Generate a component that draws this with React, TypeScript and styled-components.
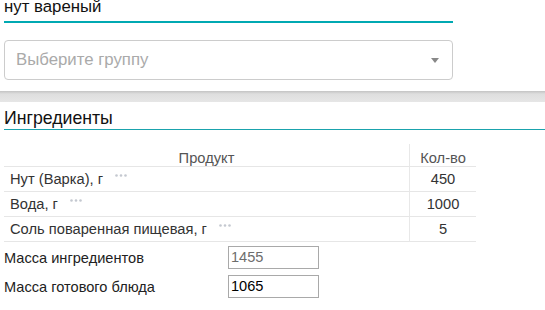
import styled, { createGlobalStyle } from 'styled-components'

const GlobalStyle = createGlobalStyle`
  html, body {
    margin: 0;
    padding: 0;
    background: #fff;
    overflow: hidden;
  }
  body {
    font-family: 'Liberation Sans', Arial, sans-serif;
    color: #333;
  }
`

const teal = '#00a9b2'

type Ingredient = { name: string; amount: number }

const ingredients: Ingredient[] = [
  { name: 'Нут (Варка), г', amount: 450 },
  { name: 'Вода, г', amount: 1000 },
  { name: 'Соль поваренная пищевая, г', amount: 5 },
]

const MoreDots = () => (
  <Dots width="12" height="3" viewBox="0 0 12 3">
    <circle cx="1.5" cy="1.5" r="1.3" />
    <circle cx="6" cy="1.5" r="1.3" />
    <circle cx="10.5" cy="1.5" r="1.3" />
  </Dots>
)

export default function App() {
  return (
    <>
      <GlobalStyle />
      <Page>
        <TopCard>
          <NameField>нут вареный</NameField>
          <Select>
            <Placeholder>Выберите группу</Placeholder>
            <Caret />
          </Select>
        </TopCard>
        <Band />
        <Section>
          <Heading>Ингредиенты</Heading>
          <Table>
            <HeadCell $first>Продукт</HeadCell>
            <HeadCell>Кол-во</HeadCell>
            {ingredients.map((item) => (
              <Row key={item.name}>
                <NameCell>
                  {item.name}
                  <MoreDots />
                </NameCell>
                <AmountCell>{item.amount}</AmountCell>
              </Row>
            ))}
          </Table>
          <Totals>
            <Label>Масса ингредиентов</Label>
            <ValueBox $muted>1455</ValueBox>
            <Label>Масса готового блюда</Label>
            <ValueBox>1065</ValueBox>
          </Totals>
        </Section>
      </Page>
    </>
  )
}

const Page = styled.div`
  width: 545px;
  height: 310px;
  overflow: hidden;
`

const TopCard = styled.div`
  padding: 0 92px 11px 4px;
`

const NameField = styled.div`
  margin-top: -2px;
  height: 17px;
  line-height: 17px;
  padding-bottom: 6px;
  font-size: 16.8px;
  color: #111;
  border-bottom: 2px solid ${teal};
`

const Select = styled.div`
  margin-top: 17px;
  height: 40px;
  box-sizing: border-box;
  border: 1px solid #ccc;
  border-radius: 4px;
  padding: 0 13px 0 11px;
  display: flex;
  align-items: center;
  justify-content: space-between;
`

const Placeholder = styled.span`
  font-size: 16.8px;
  color: #aaa;
`

const Caret = styled.span`
  width: 0;
  height: 0;
  border-left: 4px solid transparent;
  border-right: 4px solid transparent;
  border-top: 5px solid #888;
`

const Band = styled.div`
  height: 11px;
  background: linear-gradient(#c3c3c3, #dedede 3px, #e6e6e6);
`

const Section = styled.div`
  padding-top: 6px;
`

const Heading = styled.div`
  margin-left: 4px;
  font-size: 17.7px;
  line-height: 20px;
  padding-bottom: 1px;
  color: #111;
  border-bottom: 1px solid #1aa3ad;
`

const Table = styled.div`
  margin: 14px 0 0 4px;
  width: 472px;
  display: grid;
  grid-template-columns: 406px 66px;
`

const HeadCell = styled.div<{ $first?: boolean }>`
  height: 16px;
  padding-top: 6px;
  line-height: 16px;
  font-size: 14.7px;
  color: #555;
  text-align: center;
  border-bottom: 1px solid #e6e6e6;
  border-right: ${(p) => (p.$first ? '1px solid #e8e8e8' : 'none')};
`

const Row = styled.div`
  display: contents;
`

const NameCell = styled.div`
  height: 24px;
  line-height: 24px;
  padding-left: 6px;
  font-size: 14.7px;
  color: #333;
  border-bottom: 1px solid #e6e6e6;
  border-right: 1px solid #e8e8e8;
  white-space: nowrap;
`

const AmountCell = styled.div`
  height: 24px;
  line-height: 24px;
  text-align: center;
  font-size: 14.7px;
  color: #333;
  border-bottom: 1px solid #e6e6e6;
`

const Dots = styled.svg`
  margin-left: 12px;
  vertical-align: 7px;
  fill: #c4c8d0;
`

const Totals = styled.div`
  margin: 4px 0 0 4px;
  display: grid;
  grid-template-columns: 224px 91px;
  row-gap: 6px;
  align-items: center;
`

const Label = styled.div`
  font-size: 14.6px;
  color: #222;
`

const ValueBox = styled.div<{ $muted?: boolean }>`
  height: 23px;
  box-sizing: border-box;
  border: 1px solid #a9a9a9;
  padding-left: 2px;
  line-height: 21px;
  font-size: 14.6px;
  color: ${(p) => (p.$muted ? '#6d6d6d' : '#000')};
`
